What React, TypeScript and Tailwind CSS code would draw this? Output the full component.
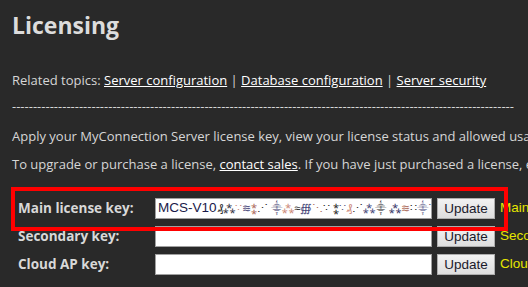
export default function App() {
  const rows = [
    { label: "Main license key:", value: "MCS-V10", status: "Main license key is valid" },
    { label: "Secondary key:", value: "", status: "Secondary key not set" },
    { label: "Cloud AP key:", value: "", status: "Cloud AP key not set" },
  ];

  // scrambled tail of the license key, as it appears in the screenshot
  const noise = [
    ["₰", "#222"], ["⁂", "#334"], ["∵", "#c87"], ["≋", "#447"], ["⁑", "#a65"], ["⋰", "#222"],
    [" ", ""], ["⸎", "#336"], ["⁂", "#c87"], ["≈", "#222"], ["∰", "#447"], ["⋱", "#a65"], ["∵", "#222"],
    [" ", ""], ["⁑", "#222"], ["∵", "#557"], ["₰", "#c87"], ["⋰", "#222"], ["⁂", "#447"], ["⸎", "#222"],
    [" ", ""], ["⁂", "#336"], ["≋", "#a65"], ["∷", "#222"], ["⸎", "#447"], ["⋱", "#557"], ["⁑", "#222"],
  ];

  return (
    <div className="relative w-[528px] h-[287px] overflow-hidden bg-[#292929] text-[#d6d6d6] font-['Open_Sans',sans-serif] text-[13px]">
      <div className="px-3 pt-[9px]">
        <h1 className="text-[23px] font-bold leading-[32px] text-[#dcdcdc]">Licensing</h1>

        <p className="mt-[30px] leading-[18px] whitespace-nowrap">
          Related topics: <a className="underline text-white">Server configuration</a> |{" "}
          <a className="underline text-white">Database configuration</a> |{" "}
          <a className="underline text-white">Server security</a>
        </p>

        <div className="mt-[8px] leading-[18px] whitespace-nowrap overflow-hidden">
          {"-".repeat(120)}
        </div>

        <p className="mt-[12px] leading-[18px] whitespace-nowrap">
          Apply your MyConnection Server license key, view your license status and allowed usage.
        </p>
        <p className="mt-[10px] leading-[18px] whitespace-nowrap">
          To upgrade or purchase a license, <a className="underline text-white">contact sales</a>. If you
          have just purchased a license, enter your key below.
        </p>

        <div className="mt-[25px] ml-[6px] flex flex-col gap-[7px]">
          {rows.map((r) => (
            <div key={r.label} className="flex items-center h-[21px] whitespace-nowrap">
              <div className="w-[137px] shrink-0 font-bold text-[13.5px] text-[#d8d8d8]">{r.label}</div>
              <div className="w-[277px] shrink-0 h-[21px] bg-white border border-[#a0a0a0] flex items-center px-[2px] overflow-hidden font-['Liberation_Sans',sans-serif] text-[13.5px] text-[#1a1a4a]">
                {r.value && (
                  <>
                    <span>{r.value}</span>
                    <span className="text-[11px] ml-[1px] whitespace-pre">
                      {noise.map(([c, col], i) => (
                        <span key={i} style={{ color: col || undefined }}>
                          {c}
                        </span>
                      ))}
                    </span>
                  </>
                )}
              </div>
              <button className="shrink-0 ml-[5px] h-[21px] w-[58px] border border-[#adadad] bg-gradient-to-b from-[#f2f2f2] to-[#dedede] text-[#1a1a2a] font-['Liberation_Sans',sans-serif] text-[13.5px] leading-none">
                Update
              </button>
              <span className="shrink-0 ml-[5px] text-[#e6e600] text-[13.5px] font-['Liberation_Sans',sans-serif]">{r.status}</span>
            </div>
          ))}
        </div>
      </div>

      <div className="absolute left-[11px] top-[187px] w-[497px] h-[44px] border-4 border-[#ff0000] pointer-events-none" />
    </div>
  );
}
